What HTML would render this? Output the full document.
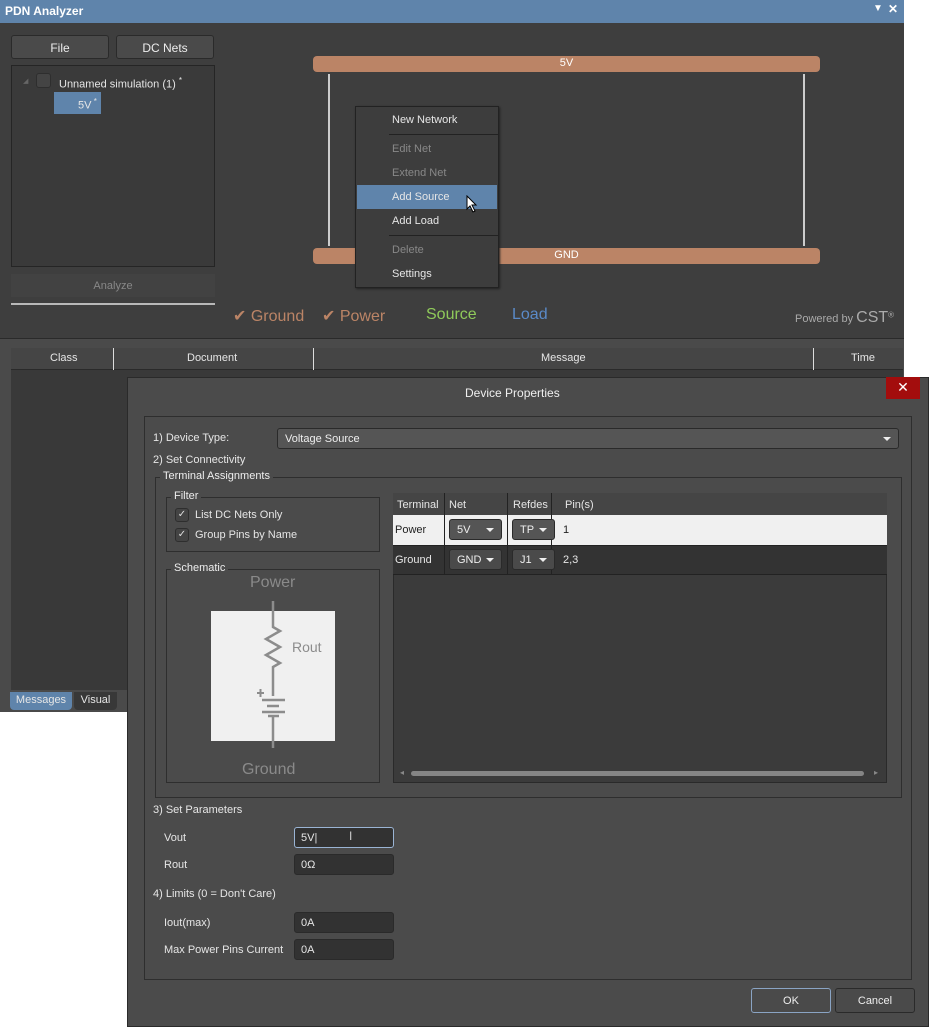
<!DOCTYPE html>
<html><head><meta charset="utf-8"><style>
*{margin:0;padding:0;box-sizing:border-box}
body{width:929px;height:1027px;background:#fff;position:relative;overflow:hidden;font-family:"Liberation Sans",sans-serif;font-size:11px;color:#e6e6e6}
.a{position:absolute}
.btn{position:absolute;background:#4a4a4a;border:1px solid #2a2a2a;border-radius:3px;text-align:center;color:#eee;font-size:12px}
.grp{position:absolute;border:1px solid #2e2e2e}
.gl{position:absolute;background:#4b4b4b;padding:0 3px;top:-8px;color:#eee;font-size:11px}
.inp{position:absolute;left:294px;width:100px;height:21px;background:#323232;border:1px solid #2a2a2a;border-radius:3px;padding:4px 6px;font-size:11px}
.cb{position:absolute;width:14px;height:14px;border:1px solid #2e2e2e;border-radius:3px;background:#444;color:#ddd;font-size:10px;line-height:12px;text-align:center}
.dd{position:absolute;height:21px;background:#555;border:1px solid #2a2a2a;border-radius:3px;padding:4px 7px;font-size:11px;color:#eee}
.dd:after{content:"";position:absolute;right:7px;top:8px;border:4px solid transparent;border-top:4px solid #eee;border-bottom:0}
.mi{position:absolute;left:36px;font-size:11px}
.sep{position:absolute;left:33px;right:0;height:1px;background:#222}
</style></head><body>
<!-- PDN window -->
<div class="a" style="left:0;top:0;width:904px;height:712px;background:#3e3e3e"></div>
<div class="a" style="left:0;top:0;width:904px;height:23px;background:#5f84ab"></div>
<div class="a" style="left:5px;top:4px;font-size:12px;font-weight:bold;color:#fff">PDN Analyzer</div>
<div class="a" style="left:873px;top:3px;font-size:10px;color:#fff">▼</div>
<div class="a" style="left:888px;top:2px;font-size:12px;font-weight:bold;color:#fff">✕</div>
<div class="btn" style="left:11px;top:35px;width:98px;height:24px;padding-top:5px">File</div>
<div class="btn" style="left:116px;top:35px;width:98px;height:24px;padding-top:5px">DC Nets</div>
<div class="a" style="left:11px;top:65px;width:204px;height:202px;background:#3a3a3a;border:1px solid #252525"></div>
<div class="a" style="left:23px;top:77px;font-size:7px;color:#666">◢</div>
<div class="cb" style="left:36px;top:73px;width:15px;height:15px"></div>
<div class="a" style="left:59px;top:76px;font-size:11px">Unnamed simulation (1) <sup style="font-size:8px">*</sup></div>
<div class="a" style="left:54px;top:92px;width:47px;height:22px;background:#5f84ab;padding:5px 0 0 24px;font-size:11px">5V<sup style="font-size:8px"> *</sup></div>
<div class="a" style="left:11px;top:274px;width:204px;height:23px;background:#424242;color:#888;text-align:center;padding-top:6px;font-size:11px">Analyze</div>
<div class="a" style="left:11px;top:303px;width:204px;height:2px;background:#b8b8b8"></div>
<!-- rails -->
<div class="a" style="left:313px;top:56px;width:507px;height:16px;background:#bb8466;border-radius:4px;text-align:center;font-size:11px;color:#fff;padding-top:1px">5V</div>
<div class="a" style="left:313px;top:248px;width:507px;height:16px;background:#bb8466;border-radius:4px;text-align:center;font-size:11px;color:#fff;padding-top:1px">GND</div>
<div class="a" style="left:328px;top:74px;width:2px;height:172px;background:#ccc"></div>
<div class="a" style="left:803px;top:74px;width:2px;height:172px;background:#ccc"></div>
<!-- menu -->
<div class="a" style="left:355px;top:106px;width:144px;height:182px;background:#3d3d3d;border:1px solid #222;box-shadow:1px 1px 2px #222">
<div class="mi" style="top:7px">New Network</div>
<div class="sep" style="top:27px"></div>
<div class="mi" style="top:36px;color:#888">Edit Net</div>
<div class="mi" style="top:60px;color:#888">Extend Net</div>
<div class="a" style="left:1px;top:78px;width:140px;height:24px;background:#5f84ab"></div>
<div class="mi" style="top:84px">Add Source</div>
<svg class="a" style="left:110px;top:88px" width="12" height="18"><path d="M1 1 L1 14 L4 11 L7 17 L9 16 L6 10 L10 10 Z" fill="#fff" stroke="#000" stroke-width="1"/></svg>
<div class="mi" style="top:108px">Add Load</div>
<div class="sep" style="top:128px"></div>
<div class="mi" style="top:137px;color:#888">Delete</div>
<div class="mi" style="top:161px">Settings</div>
</div>
<!-- legend -->
<div class="a" style="left:233px;top:306px;font-size:16px;color:#bb8466">✔ Ground</div>
<div class="a" style="left:322px;top:306px;font-size:16px;color:#bb8466">✔ Power</div>
<div class="a" style="left:426px;top:306px;font-size:16px;color:#8fca5a">Source</div>
<div class="a" style="left:512px;top:306px;font-size:16px;color:#5a8ac8">Load</div>
<div class="a" style="left:795px;top:309px;font-size:11px;color:#aaa">Powered by <span style="font-size:16px">CST</span><sup style="font-size:8px">®</sup></div>
<!-- lower panel -->
<div class="a" style="left:0;top:338px;width:904px;height:374px;background:#4a4a4a;border-top:1px solid #2a2a2a"></div>
<div class="a" style="left:11px;top:348px;width:892px;height:342px;background:#393939"></div>
<div class="a" style="left:11px;top:348px;width:892px;height:22px;background:#454545;border-bottom:1px solid #2a2a2a"></div>
<div class="a" style="left:113px;top:348px;width:1px;height:22px;background:#ddd"></div>
<div class="a" style="left:313px;top:348px;width:1px;height:22px;background:#ddd"></div>
<div class="a" style="left:813px;top:348px;width:1px;height:22px;background:#ddd"></div>
<div class="a" style="left:50px;top:352px">Class</div>
<div class="a" style="left:187px;top:352px">Document</div>
<div class="a" style="left:541px;top:352px">Message</div>
<div class="a" style="left:851px;top:352px">Time</div>
<div class="a" style="left:10px;top:692px;width:62px;height:18px;background:#5f84ab;border-radius:0 0 4px 4px;text-align:center;padding-top:2px">Messages</div>
<div class="a" style="left:74px;top:692px;width:43px;height:18px;background:#383838;border-radius:0 0 4px 4px;text-align:center;padding-top:2px">Visual</div>
<!-- dialog -->
<div class="a" style="left:127px;top:377px;width:802px;height:650px;background:#4b4b4b;border:1px solid #2a2a2a"></div>
<div class="a" style="left:465px;top:386px;font-size:12px;color:#f0f0f0">Device Properties</div>
<div class="a" style="left:886px;top:377px;width:34px;height:22px;background:#a30d0d;color:#fff;text-align:center;font-size:14px;padding-top:2px">✕</div>
<div class="grp" style="left:144px;top:416px;width:768px;height:564px"></div>
<div class="a" style="left:153px;top:432px">1) Device Type:</div>
<div class="dd" style="left:277px;top:428px;width:622px;height:21px;background:#555">Voltage Source</div>
<div class="a" style="left:153px;top:454px">2) Set Connectivity</div>
<div class="grp" style="left:155px;top:477px;width:747px;height:321px"><div class="gl" style="left:4px">Terminal Assignments</div></div>
<div class="grp" style="left:166px;top:497px;width:214px;height:55px"><div class="gl" style="left:4px">Filter</div></div>
<div class="cb" style="left:175px;top:508px">✓</div><div class="a" style="left:195px;top:509px">List DC Nets Only</div>
<div class="cb" style="left:175px;top:528px">✓</div><div class="a" style="left:195px;top:529px">Group Pins by Name</div>
<div class="grp" style="left:166px;top:569px;width:214px;height:214px"><div class="gl" style="left:4px">Schematic</div></div>
<div class="a" style="left:250px;top:574px;font-size:16px;color:#8a8a8a">Power</div>
<div class="a" style="left:242px;top:761px;font-size:16px;color:#8a8a8a">Ground</div>
<svg class="a" style="left:200px;top:595px" width="150" height="160">
<rect x="11" y="16" width="124" height="130" fill="#f0f0f0"/>
<g stroke="#8c8c8c" stroke-width="2.5" fill="none">
<path d="M73 6 V32 L80 36 L66 44 L80 52 L66 60 L80 68 L73 72 V101"/>
<path d="M62 105 H85 M67 111 H79 M62 117 H85 M68 121 H79"/>
<path d="M73 121 V153"/>
<path d="M57 98 H64 M60.5 94 V102" stroke-width="2"/>
</g>
<text x="92" y="57" font-family="Liberation Sans" font-size="14" fill="#8c8c8c">Rout</text>
</svg>
<!-- table -->
<div class="a" style="left:393px;top:493px;width:494px;height:290px;background:#3b3b3b;border:1px solid #2a2a2a"></div>
<div class="a" style="left:393px;top:493px;width:494px;height:22px;background:#454545"></div>
<div class="a" style="left:393px;top:515px;width:494px;height:30px;background:#f0f0f0"></div>
<div class="a" style="left:393px;top:545px;width:494px;height:30px;background:#333;border-top:1px solid #222;border-bottom:1px solid #222"></div>
<div class="a" style="left:444px;top:493px;width:1px;height:82px;background:#222"></div>
<div class="a" style="left:507px;top:493px;width:1px;height:82px;background:#222"></div>
<div class="a" style="left:551px;top:493px;width:1px;height:82px;background:#222"></div>
<div class="a" style="left:397px;top:499px">Terminal</div><div class="a" style="left:449px;top:499px">Net</div><div class="a" style="left:513px;top:499px">Refdes</div><div class="a" style="left:565px;top:499px">Pin(s)</div>
<div class="a" style="left:395px;top:524px;color:#222">Power</div>
<div class="dd" style="left:449px;top:519px;width:53px">5V</div>
<div class="dd" style="left:512px;top:519px;width:43px">TP</div>
<div class="a" style="left:563px;top:524px;color:#222">1</div>
<div class="a" style="left:395px;top:554px">Ground</div>
<div class="dd" style="left:449px;top:549px;width:53px;background:#4a4a4a">GND</div>
<div class="dd" style="left:512px;top:549px;width:43px;background:#4a4a4a">J1</div>
<div class="a" style="left:563px;top:554px">2,3</div>
<div class="a" style="left:411px;top:771px;width:453px;height:5px;background:#858585;border-radius:3px"></div>
<div class="a" style="left:400px;top:768px;font-size:8px;color:#888">◂</div>
<div class="a" style="left:874px;top:768px;font-size:8px;color:#888">▸</div>
<!-- params -->
<div class="a" style="left:153px;top:804px">3) Set Parameters</div>
<div class="a" style="left:164px;top:832px">Vout</div>
<div class="inp" style="top:827px;border-color:#9ab4d4">5V|</div>
<div class="a" style="left:349px;top:829px;font-size:12px;color:#ccc">I</div>
<div class="a" style="left:164px;top:859px">Rout</div>
<div class="inp" style="top:854px">0Ω</div>
<div class="a" style="left:153px;top:888px">4) Limits (0 = Don't Care)</div>
<div class="a" style="left:164px;top:917px">Iout(max)</div>
<div class="inp" style="top:912px">0A</div>
<div class="a" style="left:164px;top:944px">Max Power Pins Current</div>
<div class="inp" style="top:939px">0A</div>
<div class="btn" style="left:751px;top:988px;width:80px;height:25px;padding-top:6px;border-color:#8aa4c4;font-size:11px">OK</div>
<div class="btn" style="left:835px;top:988px;width:80px;height:25px;padding-top:6px;font-size:11px">Cancel</div>
</body></html>
